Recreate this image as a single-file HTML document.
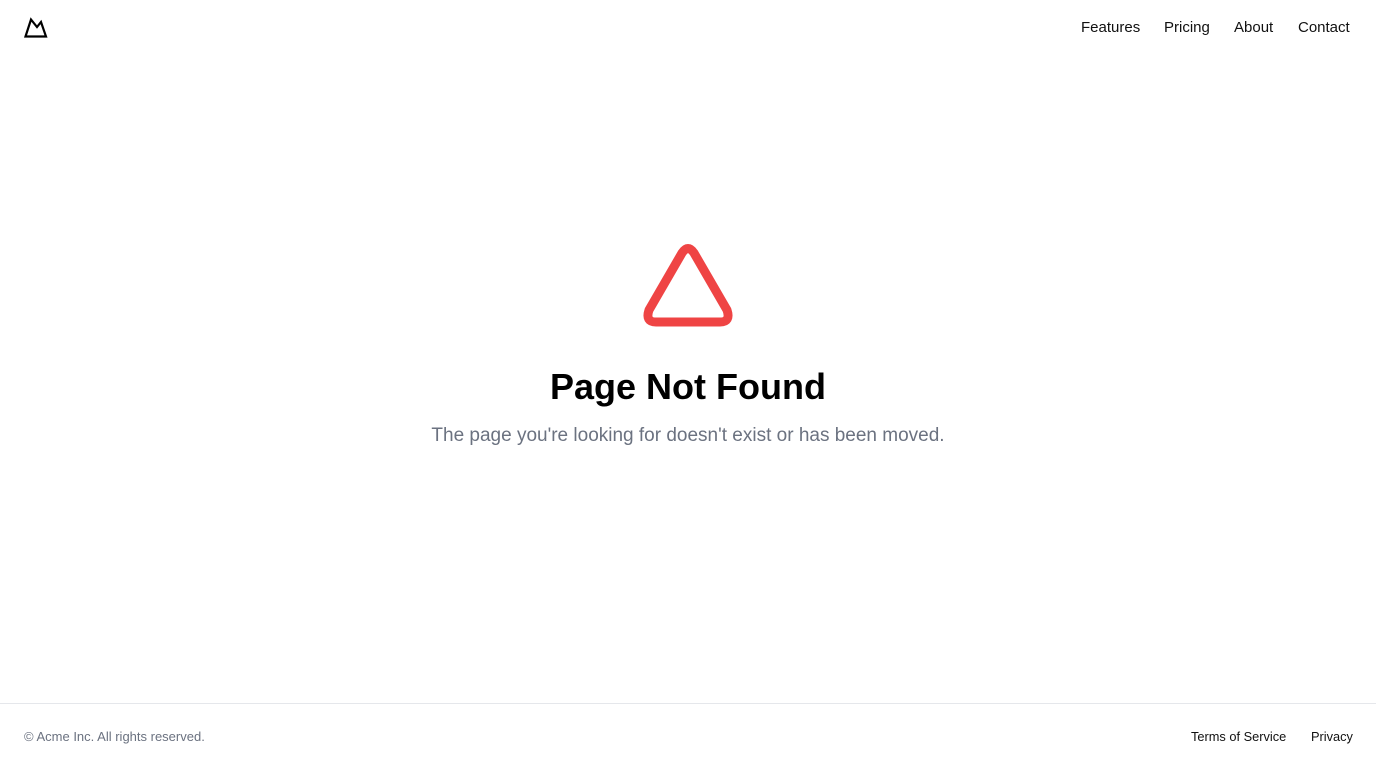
<!DOCTYPE html>
<html><head><style>
body{margin:0;width:1376px;height:768px;background:#fff;font-family:"Liberation Sans",sans-serif;position:relative;overflow:hidden}
nav a{position:absolute;top:19px;font-size:15px;color:#111;text-decoration:none}
h1{position:absolute;top:366px;left:0;width:1376px;text-align:center;margin:0;font-size:36px;font-weight:700;color:#000}
p{position:absolute;top:425px;left:0;width:1376px;text-align:center;margin:0;font-size:19px;color:#6b7280}
footer{position:absolute;top:703px;left:0;width:1376px;height:65px;border-top:1px solid #e5e7eb}
footer span{position:absolute;top:25px;font-size:12.8px}
</style></head><body>
<svg style="position:absolute;left:22px;top:16px" width="28" height="24" viewBox="22 16 28 24"><path d="M25.5 36.5 L31 19.5 L37 27 L41 22 L46 36.5 Z" fill="none" stroke="#000" stroke-width="2.2" stroke-linejoin="miter"/></svg>
<nav><a style="left:1081px">Features</a><a style="left:1164px">Pricing</a><a style="left:1234px">About</a><a style="left:1298px">Contact</a></nav>
<svg style="position:absolute;left:638px;top:240px" width="100" height="92" viewBox="0 0 100 92"><path d="M44 13 Q50 4 56 13 L89 70 Q93 82 82 82 L18 82 Q7 82 11 70 Z" fill="none" stroke="#ef4444" stroke-width="9" stroke-linejoin="round"/></svg>
<h1>Page Not Found</h1>
<p>The page you're looking for doesn't exist or has been moved.</p>
<footer><span style="left:24px;color:#6b7280;font-size:13px">© Acme Inc. All rights reserved.</span><span style="left:1191px;color:#111">Terms of Service</span><span style="left:1311px;color:#111">Privacy</span></footer>
</body></html>
